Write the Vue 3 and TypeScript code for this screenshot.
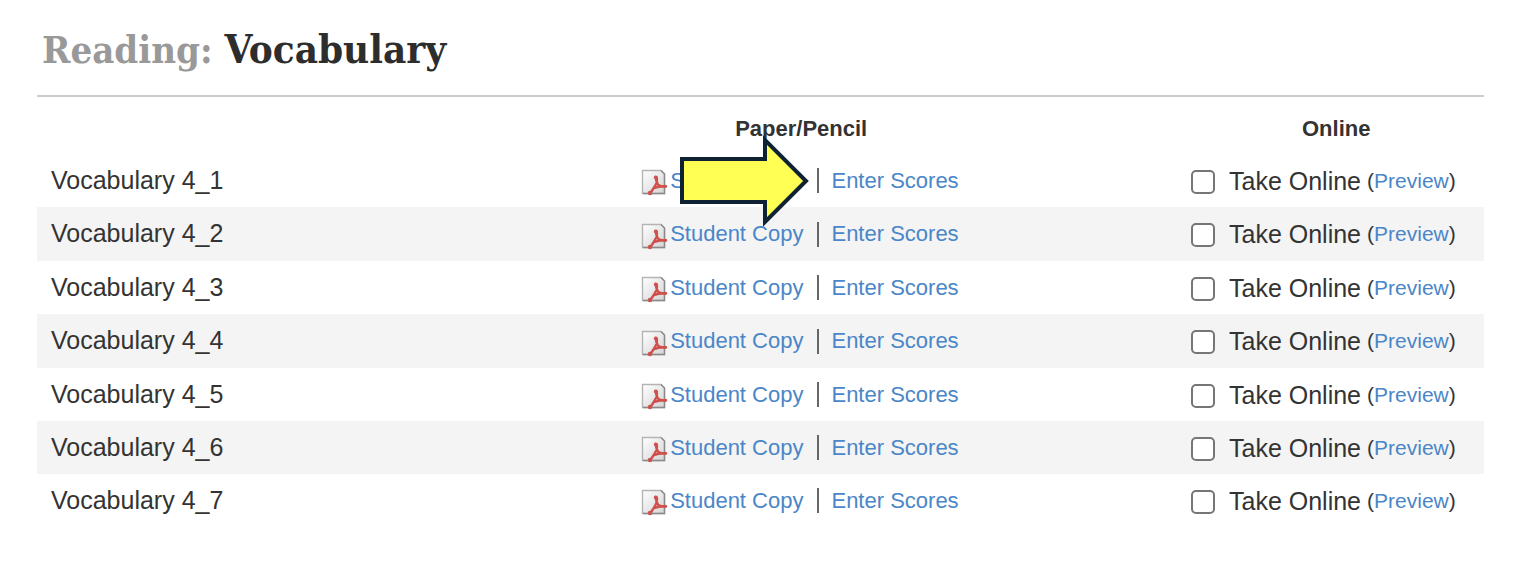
<script setup lang="ts">
interface Quiz {
  id: string
  name: string
}

const quizzes: Quiz[] = [1, 2, 3, 4, 5, 6, 7].map((n) => ({
  id: `quiz-${n}`,
  name: `Vocabulary 4_${n}`,
}))
</script>

<template>
  <main class="page">
    <h1><span class="subject">Reading: </span>Vocabulary</h1>
    <table>
      <thead>
        <tr>
          <td></td>
          <th scope="col" class="paper-head">Paper/Pencil</th>
          <th scope="col" class="online-head">Online</th>
        </tr>
      </thead>
      <tbody>
        <tr v-for="(quiz, index) in quizzes" :key="quiz.id">
          <td class="name">{{ quiz.name }}</td>
          <td>
            <div class="actions">
              <svg class="pdf" viewBox="0 0 27 27" aria-hidden="true">
                <defs>
                  <linearGradient :id="`${quiz.id}-sheet`" x1="0" y1="0" x2="1" y2="1">
                    <stop offset="0" stop-color="#ffffff" />
                    <stop offset="1" stop-color="#d4d4d4" />
                  </linearGradient>
                </defs>
                <path d="M1.5 1.5H20L23.5 5V24.5H1.5Z" :fill="`url(#${quiz.id}-sheet)`" stroke="#b4b4b4" stroke-width="1.4" />
                <path d="M2 24.5H23.5V5L20 1.5" fill="none" stroke="#8a8a8a" stroke-width="1.4" />
                <path
                  d="M14.6 8C15 11 15.6 13.4 17 15.6C18.8 17.4 21.5 17.8 25 17.2M15.6 8.5C16.6 11.5 15.6 14.5 13.6 17.6C12 20.4 10.4 22.8 8.8 24.4M13 19.2C16 18 20 17.2 24 17.4"
                  fill="none" stroke="#d0504b" stroke-width="2.5" stroke-linecap="round" stroke-linejoin="round"
                />
                <circle cx="14.8" cy="8.4" r="1.9" fill="#d0504b" />
                <circle cx="9" cy="24" r="2.2" fill="#d0504b" />
                <circle cx="24" cy="17.4" r="1.7" fill="#d0504b" />
              </svg>
              <a href="#student-copy">Student Copy</a>
              <span class="divider"></span>
              <a href="#enter-scores">Enter Scores</a>
              <svg v-if="index === 0" class="arrow" viewBox="0 0 130 92" aria-hidden="true">
                <path d="M2 25H85V6L126 47L85 88V68H2Z" fill="#ffff54" stroke="#0e2233" stroke-width="4" />
              </svg>
            </div>
          </td>
          <td>
            <div class="choice">
              <input :id="quiz.id" type="checkbox" />
              <label :for="quiz.id">Take Online</label>
              <span class="preview">(<a href="#preview">Preview</a>)</span>
            </div>
          </td>
        </tr>
      </tbody>
    </table>
  </main>
</template>

<style>
body {
  margin: 0;
  background: #fff;
}
</style>

<style scoped>
.page {
  padding: 24px 44px 0 37px;
  font-family: "Liberation Sans", Arial, sans-serif;
  color: #333;
}

h1 {
  margin: 0;
  padding: 0 5px 20px;
  border-bottom: 2px solid #ccc;
  font-family: "DejaVu Serif Condensed", "DejaVu Serif", serif;
  font-size: 40px;
  line-height: 50px;
  font-weight: 700;
  color: #2d2d2d;
}

.subject {
  font-size: 38px;
  color: #999;
}

table {
  width: 100%;
  border-collapse: collapse;
  table-layout: fixed;
}

th,
td {
  padding: 0;
  text-align: left;
}

thead tr {
  height: 57px;
}

th {
  box-sizing: border-box;
  font-size: 22px;
  line-height: 26px;
  vertical-align: top;
}

.paper-head {
  width: 38%;
  padding: 19px 0 0 94px;
}

.online-head {
  width: 293px;
  padding: 19px 0 0 111px;
}

tbody tr {
  height: 53px;
}

tbody tr:nth-child(even) {
  height: 54px;
  background: #f4f4f4;
}

tbody tr:nth-child(n + 6) {
  height: 53px;
}

.name {
  padding: 0 0 2px 14px;
  font-size: 25px;
  line-height: 28px;
}

a {
  color: #4a86c8;
  text-decoration: none;
}

.actions,
.choice {
  position: relative;
  display: flex;
  align-items: center;
  white-space: nowrap;
  line-height: 28px;
}

.actions {
  font-size: 22px;
}

.pdf {
  width: 27px;
  height: 27px;
  margin: 4px 2px 0 0;
}

.divider {
  width: 2px;
  height: 25px;
  margin: 0 12px 0 14px;
  background: #666;
}

.arrow {
  position: absolute;
  left: 39px;
  top: -31px;
  width: 130px;
  height: 92px;
  overflow: visible;
}

input {
  appearance: none;
  box-sizing: border-box;
  width: 24px;
  height: 24px;
  margin: 2px 14px 0 0;
  border: 2px solid #767676;
  border-radius: 5px;
  background: #fff;
}

label {
  margin-right: 6px;
  font-size: 25px;
}

.preview {
  font-size: 21px;
}
</style>
